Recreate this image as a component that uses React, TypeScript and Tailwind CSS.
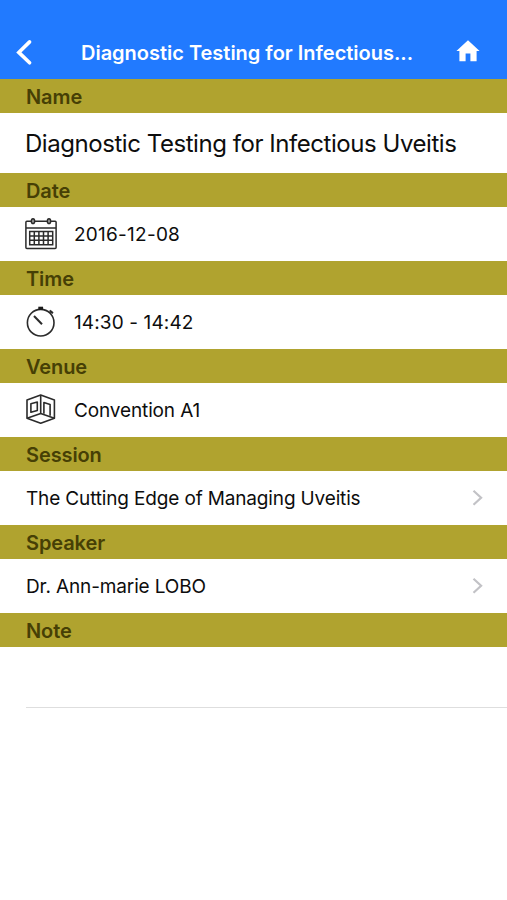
import type { ReactNode } from "react";

function CalendarIcon() {
  return (
    <svg width="32" height="32" viewBox="0 0 32 32" fill="none" stroke="#2b2b2b" strokeWidth="1.5">
      <rect x="0.9" y="3.2" width="30.2" height="27.2" rx="1" />
      <path d="M1 10h30" />
      <ellipse cx="8" cy="3.2" rx="1.6" ry="2.4" fill="#aaa" />
      <ellipse cx="24" cy="3.2" rx="1.6" ry="2.4" fill="#aaa" />
      <path d="M4.7 13.5h23v13.2h-23zM4.7 17.9h23M4.7 22.3h23M9.3 13.5v13.2M13.9 13.5v13.2M18.5 13.5v13.2M23.1 13.5v13.2" />
    </svg>
  );
}

function StopwatchIcon() {
  return (
    <svg width="32" height="32" viewBox="0 0 32 32" fill="none" stroke="#2b2b2b">
      <circle cx="15.7" cy="16.7" r="13.3" strokeWidth="1.6" />
      <path d="M13.3 0.7h4.8v3.2h-4.8z" fill="#1a1a1a" stroke="none" />
      <path d="M24.6 4.6l3.4 2.7M25.6 7l1.6-1.9" strokeWidth="1.9" />
      <path d="M9 10l8 8.2" strokeWidth="2" />
    </svg>
  );
}

function VenueIcon() {
  return (
    <svg width="32" height="32" viewBox="0 0 32 32" fill="none" stroke="#2b2b2b" strokeWidth="1.6" strokeLinejoin="round">
      <path d="M15.7 1l13.7 5v18.2l-13.7 5-13.7-5V6z" />
      <path d="M15.7 1v18.5M2 24.2l13.7-4.7 13.7 4.7" />
      <path d="M5.9 9.8l6.4-1.7v8.4l-6.4 1.8z" />
      <path d="M18.9 19.8V8.6l6.2 1.8v11.4" />
    </svg>
  );
}

function Chevron() {
  return (
    <svg width="12" height="18" viewBox="0 0 12 18" fill="none" stroke="#c2c2c6" strokeWidth="2.2">
      <path d="M1.5 1.8l7.6 7-7.6 7" />
    </svg>
  );
}

function Section({ title, children }: { title: string; children?: ReactNode }) {
  return (
    <section>
      <h2 className="flex h-[34px] items-center bg-[#b0a32f] pl-[26px] pt-[2px] text-[20px] font-semibold tracking-[-0.1px] text-[#463f05]">
        {title}
      </h2>
      {children}
    </section>
  );
}

function IconRow({ icon, text, spacing }: { icon: ReactNode; text: string; spacing: string }) {
  return (
    <div className="flex h-[54px] items-center gap-[17px] pl-[25px]">
      {icon}
      <span className={`whitespace-nowrap pt-[2px] text-[19px] ${spacing}`}>{text}</span>
    </div>
  );
}

function LinkRow({ text, spacing }: { text: string; spacing: string }) {
  return (
    <div className="flex h-[54px] items-center justify-between pl-[26px] pr-[23px]">
      <span className={`whitespace-nowrap pt-[2px] text-[19px] ${spacing}`}>{text}</span>
      <Chevron />
    </div>
  );
}

export default function App() {
  return (
    <div className="h-[900px] w-[507px] overflow-hidden bg-white font-['Inter',sans-serif] text-[#0d0d0d]">
      {/* Navigation bar */}
      <header className="flex h-[79px] items-start justify-between bg-[#217aff] pl-4 pr-[27px] pt-[38px] text-white">
        <svg width="17" height="28" viewBox="0 0 17 28" fill="none" stroke="currentColor" strokeWidth="3.6" strokeLinecap="round">
          <path d="M13.6 3.9L2.8 14.4l10.8 10.4" />
        </svg>
        <h1 className="whitespace-nowrap pl-[5px] text-[20px] font-semibold leading-[30px] tracking-[-0.01px]">
          Diagnostic Testing for Infectious...
        </h1>
        <svg width="24" height="24" viewBox="0 0 24 24" fill="currentColor">
          <path d="M12 2.3L0.4 13H3.4v10.2h6.200v-7.600h4.800v7.600h6.200V13h3z" />
        </svg>
      </header>

      <Section title="Name">
        <p className="flex h-[60px] items-center whitespace-nowrap pl-[25px] pt-[2px] text-[24px] tracking-[-0.45px]">
          Diagnostic Testing for Infectious Uveitis
        </p>
      </Section>
      <Section title="Date">
        <IconRow icon={<CalendarIcon />} text="2016-12-08" spacing="tracking-[0.25px]" />
      </Section>
      <Section title="Time">
        <IconRow icon={<StopwatchIcon />} text="14:30 - 14:42" spacing="tracking-[0.12px]" />
      </Section>
      <Section title="Venue">
        <IconRow icon={<VenueIcon />} text="Convention A1" spacing="tracking-[-0.13px]" />
      </Section>
      <Section title="Session">
        <LinkRow text="The Cutting Edge of Managing Uveitis" spacing="tracking-[-0.15px]" />
      </Section>
      <Section title="Speaker">
        <LinkRow text="Dr. Ann-marie LOBO" spacing="tracking-[-0.13px]" />
      </Section>
      <Section title="Note">
        <div className="ml-[26px] h-[61px] border-b border-[#dedede]" />
      </Section>
    </div>
  );
}
